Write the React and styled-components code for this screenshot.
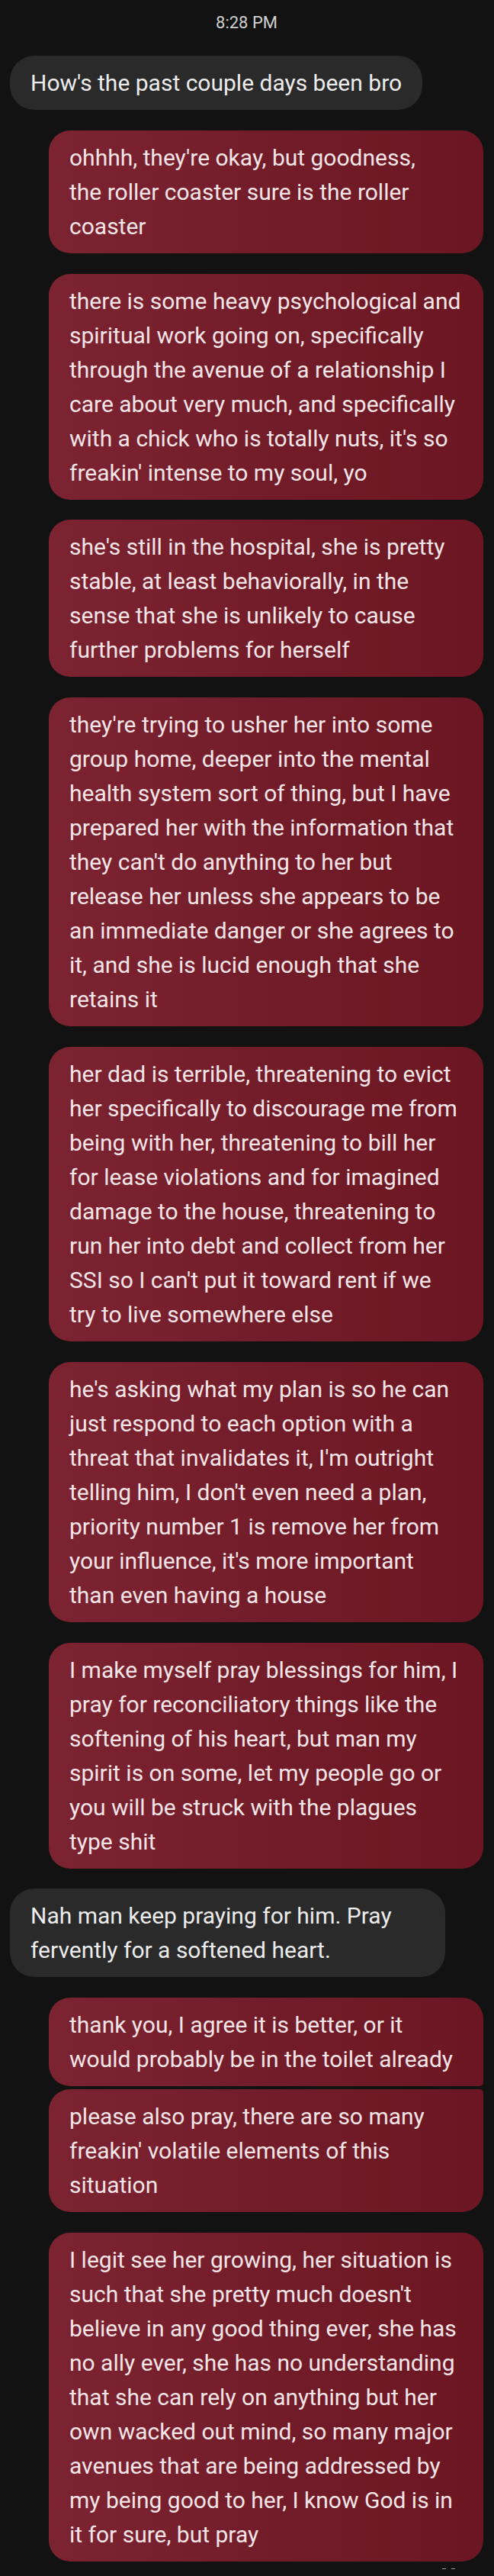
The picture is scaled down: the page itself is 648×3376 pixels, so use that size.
import React from 'react'
import styled, { createGlobalStyle } from 'styled-components'

const GlobalStyle = createGlobalStyle`
  html, body {
    margin: 0;
    padding: 0;
    background: #121212;
  }
  body {
    font-family: Roboto, "Noto Sans", sans-serif;
    -webkit-font-smoothing: antialiased;
  }
`

const messages = [
  { from: 'them', lines: ["How's the past couple days been bro"] },
  { from: 'me', lines: ["ohhhh, they're okay, but goodness,", 'the roller coaster sure is the roller', 'coaster'] },
  {
    from: 'me',
    lines: [
      'there is some heavy psychological and',
      'spiritual work going on, specifically',
      'through the avenue of a relationship I',
      'care about very much, and specifically',
      "with a chick who is totally nuts, it's so",
      "freakin' intense to my soul, yo",
    ],
  },
  {
    from: 'me',
    lines: [
      "she's still in the hospital, she is pretty",
      'stable, at least behaviorally, in the',
      'sense that she is unlikely to cause',
      'further problems for herself',
    ],
  },
  {
    from: 'me',
    lines: [
      "they're trying to usher her into some",
      'group home, deeper into the mental',
      'health system sort of thing, but I have',
      'prepared her with the information that',
      "they can't do anything to her but",
      'release her unless she appears to be',
      'an immediate danger or she agrees to',
      'it, and she is lucid enough that she',
      'retains it',
    ],
  },
  {
    from: 'me',
    lines: [
      'her dad is terrible, threatening to evict',
      'her specifically to discourage me from',
      'being with her, threatening to bill her',
      'for lease violations and for imagined',
      'damage to the house, threatening to',
      'run her into debt and collect from her',
      "SSI so I can't put it toward rent if we",
      'try to live somewhere else',
    ],
  },
  {
    from: 'me',
    lines: [
      "he's asking what my plan is so he can",
      'just respond to each option with a',
      "threat that invalidates it, I'm outright",
      "telling him, I don't even need a plan,",
      'priority number 1 is remove her from',
      "your influence, it's more important",
      'than even having a house',
    ],
  },
  {
    from: 'me',
    lines: [
      'I make myself pray blessings for him, I',
      'pray for reconciliatory things like the',
      'softening of his heart, but man my',
      'spirit is on some, let my people go or',
      'you will be struck with the plagues',
      'type shit',
    ],
  },
  { from: 'them', wide: true, lines: ['Nah man keep praying for him. Pray', 'fervently for a softened heart.'] },
  {
    from: 'me',
    group: 'first',
    lines: ['thank you, I agree it is better, or it', 'would probably be in the toilet already'],
  },
  {
    from: 'me',
    group: 'last',
    lines: ['please also pray, there are so many', "freakin' volatile elements of this", 'situation'],
  },
  {
    from: 'me',
    lines: [
      'I legit see her growing, her situation is',
      "such that she pretty much doesn't",
      'believe in any good thing ever, she has',
      'no ally ever, she has no understanding',
      'that she can rely on anything but her',
      'own wacked out mind, so many major',
      'avenues that are being addressed by',
      'my being good to her, I know God is in',
      'it for sure, but pray',
    ],
  },
]

function Message({ msg }) {
  const Bubble = msg.from === 'me' ? Sent : Received
  return (
    <Bubble $wide={msg.wide} $group={msg.group}>
      {msg.lines.map((l, i) => (
        <Line key={i}>{l}</Line>
      ))}
    </Bubble>
  )
}

export default function App() {
  return (
    <Thread>
      <GlobalStyle />
      <Time>8:28 PM</Time>
      <List>
        {messages.map((m, i) => (
          <Message key={i} msg={m} />
        ))}
      </List>
      <Footer>
        <Dash />
        <Dash />
      </Footer>
    </Thread>
  )
}

const Thread = styled.div`
  display: flex;
  flex-direction: column;
  padding: 17px 14px 0 13px;
  min-height: 3376px;
  box-sizing: border-box;
`

const Time = styled.div`
  text-align: center;
  font-size: 22px;
  line-height: 26px;
  color: #cfcfcf;
  margin-bottom: 30px;
`

const List = styled.div`
  display: flex;
  flex-direction: column;
`

const BaseBubble = styled.div`
  box-sizing: border-box;
  padding: 13px 27px;
  font-size: 30px;
  line-height: 45px;
  border-radius: 28px;
  margin-top: 26.8px;

  &:first-child {
    margin-top: 0;
  }
`

const Received = styled(BaseBubble)`
  align-self: flex-start;
  width: ${(p) => (p.$wide ? '571px' : 'auto')};
  background: #2a2a2a;
  color: #ececec;
  border-radius: 32px;
`

const Sent = styled(BaseBubble)`
  align-self: flex-end;
  width: 570px;
  background: linear-gradient(90deg, #7c2331 0%, #6b1622 100%);
  color: #f3e5e7;
  margin-top: ${(p) => (p.$group === 'last' ? '4px' : '26.8px')};
  border-bottom-right-radius: ${(p) => (p.$group === 'first' ? '5px' : '28px')};
  border-top-right-radius: ${(p) => (p.$group === 'last' ? '5px' : '28px')};
`

const Line = styled.span`
  display: block;
  white-space: nowrap;
`

const Footer = styled.div`
  display: flex;
  justify-content: flex-end;
  gap: 7px;
  padding: 9px 37px 0 0;
`

const Dash = styled.span`
  width: 5px;
  height: 1px;
  background: #9a9a9a;
`
